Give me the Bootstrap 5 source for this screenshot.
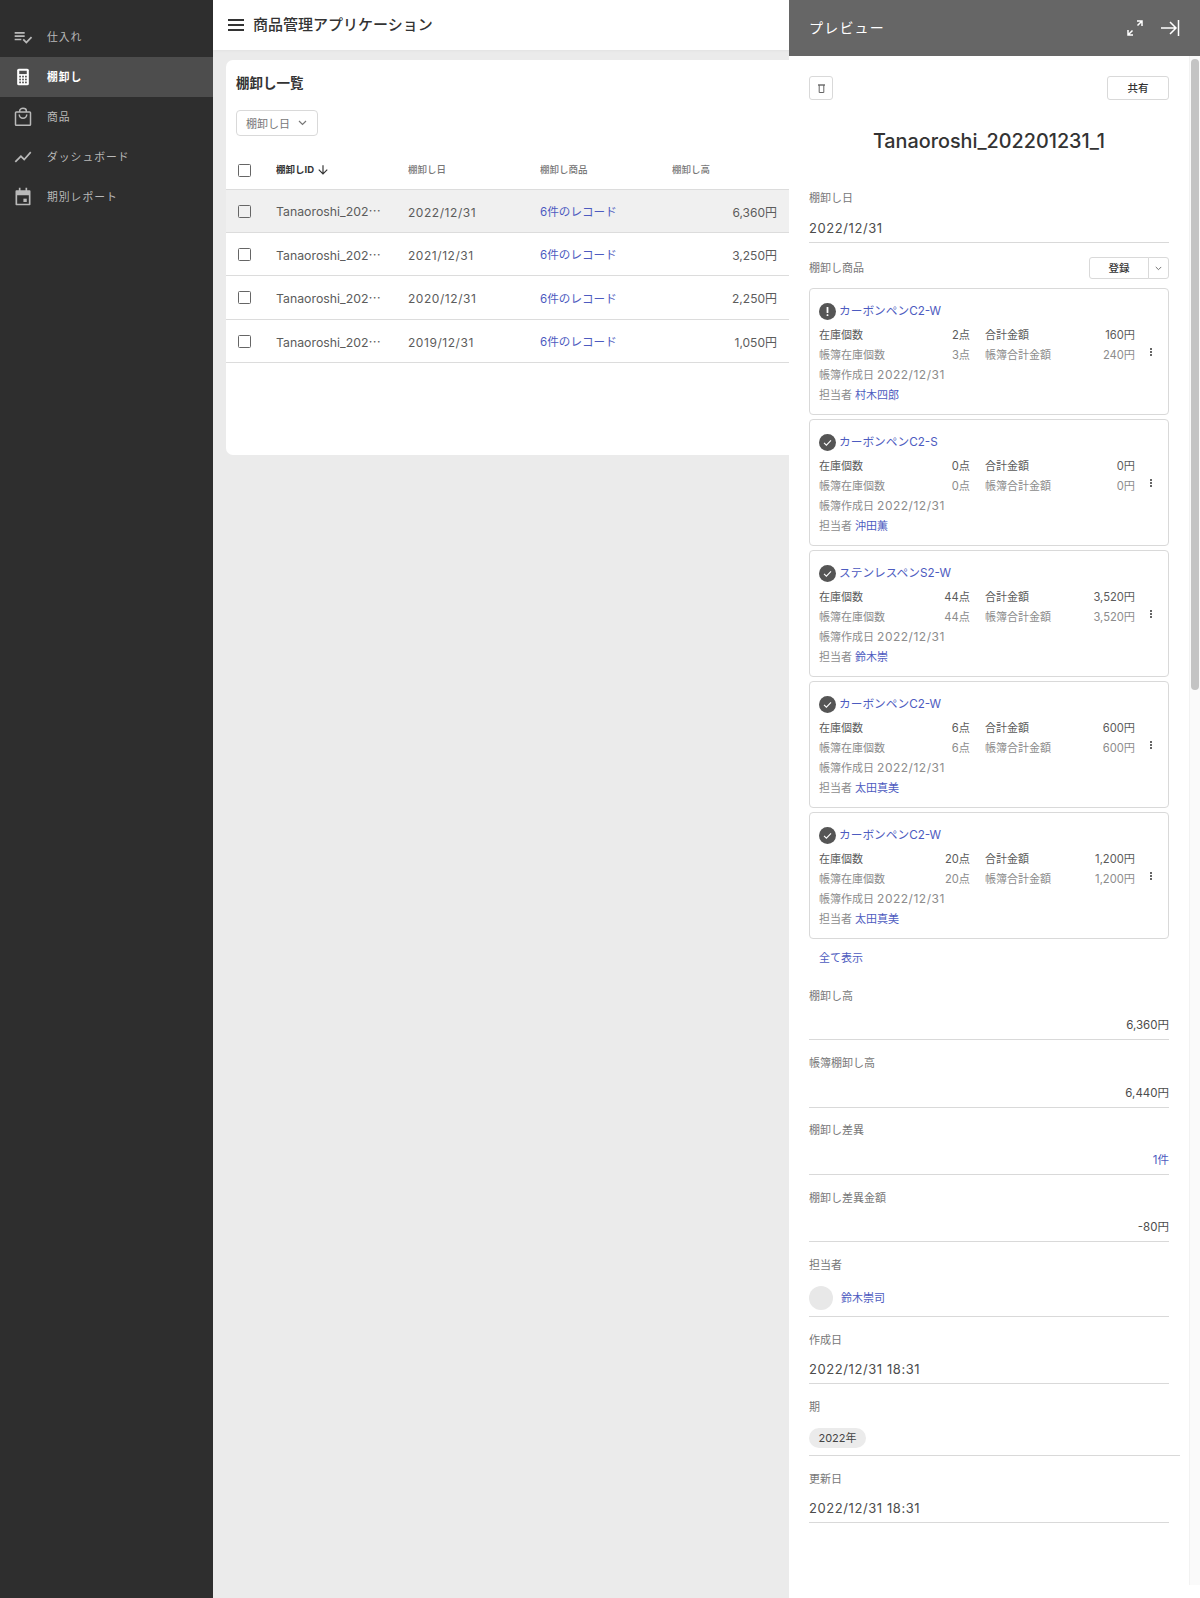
<!DOCTYPE html>
<html lang="ja">
<head>
<meta charset="utf-8">
<title>商品管理アプリケーション</title>
<link rel="stylesheet" href="https://cdn.jsdelivr.net/npm/bootstrap@5.3.0/dist/css/bootstrap.min.css">
<style>
html,body{height:100%;overflow:hidden}
body{font-family:Inter,"Noto Sans CJK JP",sans-serif;color:#333;background:#ebebeb;font-size:13px;--lnk:#4d5bc0}
a{color:var(--lnk);text-decoration:none}
.shell{height:1598px;position:relative}
.side{width:213px;background:#2e2e2e;padding-top:17px;flex:none}
.side-item{height:40px;color:#b9b9b9;font-size:10.8px;letter-spacing:1px;padding-left:13px;gap:14px}
.side-item svg{width:20px;height:20px;flex:none}
.side-item span{padding-top:2px}
.side-item.on{background:#4d4d4d;color:#fff;font-weight:700}
.mainwrap{min-width:0}
.topbar{height:50px;background:#fff;padding-left:15px;gap:9px;font-size:15px;font-weight:500;color:#333;box-shadow:0 1px 3px rgba(0,0,0,.04)}
.sheet{margin:10px 0 0 13px;height:395px;width:800px;background:#fff;border-radius:7px;overflow:hidden;padding-top:13px}
.sheet-title{font-size:13.5px;font-weight:700;line-height:20px;padding-left:10px;color:#333}
.filter-btn{margin:17px 0 15px 10px;height:26px;width:82px;border:1px solid #d9d9d9;border-radius:4px;font-size:11px;color:#777;padding:2px 0 0 9px;background:#fff;gap:8px}
.filter-btn svg{margin-top:-2px}
.inv-table{table-layout:fixed;width:563px;margin:0;--bs-table-bg:transparent;--bs-table-border-color:#dcdcdc}
.inv-table th,.inv-table td{padding:0;vertical-align:middle;border-bottom:1px solid #dcdcdc;white-space:nowrap;overflow:hidden}
.inv-table th{height:38px;font-size:9.5px;font-weight:500;color:#777;padding-top:1px}
.inv-table th.cur{color:#333;font-weight:700}
.inv-table td{height:43.4px;font-size:12.3px;color:#5c5c5c;padding-top:4px}
.inv-table td.dt{font-size:12px;letter-spacing:.55px}
.inv-table td.lk{font-size:11.6px}
.inv-table tr.sel td{background:#f0f0f0}
.tick{display:block;width:13px;height:13px;border:1.5px solid #666;border-radius:1.5px;margin-left:12px}
.inv-table td .tick{margin-top:-3px}
.amt{padding-right:12px!important;text-align:right;font-size:12px!important}
.pane{position:absolute;top:0;right:0;bottom:0;width:411px;background:#fff}
.pane-head{height:56px;background:#666;color:#fff;padding:0 20px;font-size:14px;letter-spacing:1.2px}
.pane-head>span:first-child{margin-top:-2px}
.pane-body{padding:20px 0 0 20px;width:380px}
.rail{position:absolute;top:56px;right:0;bottom:13px;width:11px;background:#fafafa;border-left:1px solid #f2f2f2}
.rail-thumb{position:absolute;top:3px;left:1px;width:8px;height:631px;border-radius:4px;background:#c4c4c4}
.ghost{height:24px;border:1px solid #d9d9d9;border-radius:3px;background:#fff;padding:1px 0 0;font-size:10.5px;font-weight:500;color:#333}
.title-main{font-size:19.8px;font-weight:500;line-height:28px;text-align:center;margin:27px 0 35px;color:#333}
.lbl{font-size:11px;line-height:16px;color:#777}
.val{font-size:13px;letter-spacing:.58px;line-height:20px;color:#4c4c4c;margin-top:11.5px;padding-bottom:4px;border-bottom:1px solid #d9d9d9}
.val.money{font-size:11.5px;letter-spacing:0}
.fld{margin-bottom:14.8px}
.goods-head{height:22px;margin-bottom:9px}
.reg{height:22px}
.reg .ghost{height:22px}
.stock{border:1px solid #d9d9d9;border-radius:4px;padding:12px 10px 9px 9px;margin-bottom:4px;height:127px;font-size:11px;line-height:20px;color:#5a5a5a}
.stock-name{font-size:11.7px;gap:3px;margin-bottom:4px}
.stock-data{width:316px}
.half{width:151px}
.half+.half{width:150px;margin-left:15px}
.half span+span{font-size:11.2px}
.dim{color:#8c8c8c}
.dt-in{font-size:12px;letter-spacing:.5px}
.dots{position:absolute;top:58px;left:339px}
.status{width:17px;height:17px;flex:none}
.all-link{display:block;font-size:11px;line-height:16px;padding-left:10px;margin:11px 0 21.5px}
.who{margin-top:13px;padding-bottom:6px;letter-spacing:0}
.who a{font-size:11px}
.avatar{width:24px;height:24px;border-radius:50%;background:#e8e8e8;flex:none}
.chip{display:block;background:#ebebeb;border-radius:10px;height:20px;width:57px;font-size:11px;letter-spacing:0;line-height:20px;text-align:center;color:#444}
.wide{width:371px;margin-top:13px;padding-bottom:7px}
</style>
</head>
<body>
<div class="shell d-flex">
  <nav class="side d-flex flex-column">
    <div class="side-item d-flex align-items-center"><svg viewBox="0 0 24 24" fill="#b9b9b9"><path d="M14 10H2v2h12v-2zm0-4H2v2h12V6zM2 16h8v-2H2v2zm19.5-4.5L23 13l-6.99 7-4.51-4.5L13 14l3.01 3 5.49-5.5z"/></svg><span>仕入れ</span></div>
    <div class="side-item on d-flex align-items-center"><svg viewBox="0 0 24 24"><rect x="5" y="2" width="14" height="20" rx="2" fill="#fff"/><rect x="7.5" y="4.5" width="9" height="4" fill="#4d4d4d"/><g fill="#4d4d4d"><rect x="7.5" y="10.5" width="2" height="2"/><rect x="11" y="10.5" width="2" height="2"/><rect x="14.5" y="10.5" width="2" height="2"/><rect x="7.5" y="14" width="2" height="2"/><rect x="11" y="14" width="2" height="2"/><rect x="14.5" y="14" width="2" height="2"/><rect x="7.5" y="17.5" width="2" height="2"/><rect x="11" y="17.5" width="2" height="2"/><rect x="14.5" y="17.5" width="2" height="2"/></g></svg><span>棚卸し</span></div>
    <div class="side-item d-flex align-items-center"><svg viewBox="0 0 24 24" fill="none" stroke="#b9b9b9" stroke-width="1.8"><rect x="3" y="6" width="18" height="16" rx="1"/><path d="M8 6V4.5a4 3 0 0 1 8 0V6M7.5 9a4.5 4.5 0 0 0 9 0"/></svg><span>商品</span></div>
    <div class="side-item d-flex align-items-center"><svg viewBox="0 0 24 24" fill="#b9b9b9"><path d="M3.5 18.49l6-6.01 4 4L22 6.92l-1.41-1.41-7.09 7.97-4-4L2 16.99z"/></svg><span>ダッシュボード</span></div>
    <div class="side-item d-flex align-items-center"><svg viewBox="0 0 24 24" fill="#b9b9b9"><path d="M7 1h2v3h6V1h2v3h3a1 1 0 0 1 1 1v16a1 1 0 0 1-1 1H4a1 1 0 0 1-1-1V5a1 1 0 0 1 1-1h3V1zM5 10v10h14V10H5z"/><rect x="12.5" y="14" width="4" height="4"/></svg><span>期別レポート</span></div>
  </nav>
  <div class="mainwrap flex-grow-1">
    <header class="topbar d-flex align-items-center">
      <svg width="16" height="12" viewBox="0 0 16 12" fill="#333"><rect width="16" height="2"/><rect y="5" width="16" height="2"/><rect y="10" width="16" height="2"/></svg>
      <span>商品管理アプリケーション</span>
    </header>
    <section class="sheet">
      <div class="sheet-title">棚卸し一覧</div>
      <button type="button" class="filter-btn btn d-flex align-items-center"><span>棚卸し日</span><svg width="9" height="6" viewBox="0 0 9 6" fill="none" stroke="#777" stroke-width="1.2"><path d="M1 1l3.5 3.5L8 1"/></svg></button>
      <table class="table inv-table">
        <colgroup><col style="width:50px"><col style="width:132px"><col style="width:132px"><col style="width:132px"><col style="width:117px"></colgroup>
        <thead><tr><th><span class="tick"></span></th><th class="cur">棚卸しID <svg width="14" height="14" viewBox="0 0 24 24" fill="#333"><path d="M20 12l-1.41-1.41L13 16.17V4h-2v12.17l-5.58-5.59L4 12l8 8 8-8z"/></svg></th><th>棚卸し日</th><th>棚卸し商品</th><th>棚卸し高</th></tr></thead>
        <tbody>
          <tr class="sel"><td><span class="tick"></span></td><td>Tanaoroshi_202⋯</td><td class="dt">2022/12/31</td><td class="lk"><a href="#">6件のレコード</a></td><td class="amt">6,360円</td></tr>
          <tr><td><span class="tick"></span></td><td>Tanaoroshi_202⋯</td><td class="dt">2021/12/31</td><td class="lk"><a href="#">6件のレコード</a></td><td class="amt">3,250円</td></tr>
          <tr><td><span class="tick"></span></td><td>Tanaoroshi_202⋯</td><td class="dt">2020/12/31</td><td class="lk"><a href="#">6件のレコード</a></td><td class="amt">2,250円</td></tr>
          <tr><td><span class="tick"></span></td><td>Tanaoroshi_202⋯</td><td class="dt">2019/12/31</td><td class="lk"><a href="#">6件のレコード</a></td><td class="amt">1,050円</td></tr>
        </tbody>
      </table>
    </section>
  </div>
  <aside class="pane">
    <div class="pane-head d-flex align-items-center justify-content-between">
      <span>プレビュー</span>
      <span class="d-flex align-items-center gap-3">
        <svg width="18" height="18" viewBox="0 0 18 18" fill="none" stroke="#fff" stroke-width="1.5"><path d="M11 2h5v5M16 2l-4.5 4.5M7 16H2v-5M2 16l4.5-4.5"/></svg>
        <svg width="20" height="18" viewBox="0 0 20 18" fill="none" stroke="#fff" stroke-width="1.5"><path d="M1 9h15M10 3l6 6-6 6M18.5 1v16"/></svg>
      </span>
    </div>
    <div class="pane-body">
      <div class="d-flex justify-content-between">
        <button type="button" class="btn ghost d-flex align-items-center justify-content-center" style="width:24px"><svg width="7" height="9" viewBox="0 0 7 9" fill="none" stroke="#666"><path d="M0 1h7" stroke-width="1.4"/><path d="M1.2 1v7.5h4.6V1" stroke-width="1"/></svg></button>
        <button type="button" class="btn ghost" style="width:62px">共有</button>
      </div>
      <div class="title-main">Tanaoroshi_202201231_1</div>
      <div class="fld"><div class="lbl">棚卸し日</div><div class="val">2022/12/31</div></div>
      <div class="goods-head d-flex align-items-center justify-content-between">
        <span class="lbl">棚卸し商品</span>
        <span class="reg btn-group"><button type="button" class="btn ghost" style="width:60px">登録</button><button type="button" class="btn ghost d-flex align-items-center justify-content-center" style="width:21px"><svg width="7" height="5" viewBox="0 0 9 6" fill="none" stroke="#666" stroke-width="1.2"><path d="M1 1l3.5 3.5L8 1"/></svg></button></span>
      </div>

      <div class="card stock">
        <div class="stock-name d-flex align-items-center"><svg class="status" viewBox="0 0 17 17"><circle cx="8.5" cy="8.5" r="8.5" fill="#555"/><rect x="7.6" y="4" width="1.8" height="6" rx=".6" fill="#fff"/><rect x="7.6" y="11.2" width="1.8" height="1.8" rx=".6" fill="#fff"/></svg><a href="#">カーボンペンC2-W</a></div>
        <div class="stock-data">
          <div class="d-flex"><div class="half d-flex justify-content-between"><span>在庫個数</span><span>2点</span></div><div class="half d-flex justify-content-between"><span>合計金額</span><span>160円</span></div></div>
          <div class="d-flex dim"><div class="half d-flex justify-content-between"><span>帳簿在庫個数</span><span>3点</span></div><div class="half d-flex justify-content-between"><span>帳簿合計金額</span><span>240円</span></div></div>
          <div class="dim">帳簿作成日 <span class="dt-in">2022/12/31</span></div>
          <div class="dim">担当者 <a href="#">村木四郎</a></div>
        </div>
        <svg class="dots" width="4" height="10" viewBox="0 0 4 10" fill="#666"><rect x="1" y="1" width="2" height="2"/><rect x="1" y="4" width="2" height="2"/><rect x="1" y="7" width="2" height="2"/></svg>
      </div>
      <div class="card stock">
        <div class="stock-name d-flex align-items-center"><svg class="status" viewBox="0 0 17 17"><circle cx="8.5" cy="8.5" r="8.5" fill="#555"/><path d="M5 8.8l2.4 2.4L12 6.4" fill="none" stroke="#fff" stroke-width="1.1"/></svg><a href="#">カーボンペンC2-S</a></div>
        <div class="stock-data">
          <div class="d-flex"><div class="half d-flex justify-content-between"><span>在庫個数</span><span>0点</span></div><div class="half d-flex justify-content-between"><span>合計金額</span><span>0円</span></div></div>
          <div class="d-flex dim"><div class="half d-flex justify-content-between"><span>帳簿在庫個数</span><span>0点</span></div><div class="half d-flex justify-content-between"><span>帳簿合計金額</span><span>0円</span></div></div>
          <div class="dim">帳簿作成日 <span class="dt-in">2022/12/31</span></div>
          <div class="dim">担当者 <a href="#">沖田薫</a></div>
        </div>
        <svg class="dots" width="4" height="10" viewBox="0 0 4 10" fill="#666"><rect x="1" y="1" width="2" height="2"/><rect x="1" y="4" width="2" height="2"/><rect x="1" y="7" width="2" height="2"/></svg>
      </div>
      <div class="card stock">
        <div class="stock-name d-flex align-items-center"><svg class="status" viewBox="0 0 17 17"><circle cx="8.5" cy="8.5" r="8.5" fill="#555"/><path d="M5 8.8l2.4 2.4L12 6.4" fill="none" stroke="#fff" stroke-width="1.1"/></svg><a href="#">ステンレスペンS2-W</a></div>
        <div class="stock-data">
          <div class="d-flex"><div class="half d-flex justify-content-between"><span>在庫個数</span><span>44点</span></div><div class="half d-flex justify-content-between"><span>合計金額</span><span>3,520円</span></div></div>
          <div class="d-flex dim"><div class="half d-flex justify-content-between"><span>帳簿在庫個数</span><span>44点</span></div><div class="half d-flex justify-content-between"><span>帳簿合計金額</span><span>3,520円</span></div></div>
          <div class="dim">帳簿作成日 <span class="dt-in">2022/12/31</span></div>
          <div class="dim">担当者 <a href="#">鈴木崇</a></div>
        </div>
        <svg class="dots" width="4" height="10" viewBox="0 0 4 10" fill="#666"><rect x="1" y="1" width="2" height="2"/><rect x="1" y="4" width="2" height="2"/><rect x="1" y="7" width="2" height="2"/></svg>
      </div>
      <div class="card stock">
        <div class="stock-name d-flex align-items-center"><svg class="status" viewBox="0 0 17 17"><circle cx="8.5" cy="8.5" r="8.5" fill="#555"/><path d="M5 8.8l2.4 2.4L12 6.4" fill="none" stroke="#fff" stroke-width="1.1"/></svg><a href="#">カーボンペンC2-W</a></div>
        <div class="stock-data">
          <div class="d-flex"><div class="half d-flex justify-content-between"><span>在庫個数</span><span>6点</span></div><div class="half d-flex justify-content-between"><span>合計金額</span><span>600円</span></div></div>
          <div class="d-flex dim"><div class="half d-flex justify-content-between"><span>帳簿在庫個数</span><span>6点</span></div><div class="half d-flex justify-content-between"><span>帳簿合計金額</span><span>600円</span></div></div>
          <div class="dim">帳簿作成日 <span class="dt-in">2022/12/31</span></div>
          <div class="dim">担当者 <a href="#">太田真美</a></div>
        </div>
        <svg class="dots" width="4" height="10" viewBox="0 0 4 10" fill="#666"><rect x="1" y="1" width="2" height="2"/><rect x="1" y="4" width="2" height="2"/><rect x="1" y="7" width="2" height="2"/></svg>
      </div>
      <div class="card stock">
        <div class="stock-name d-flex align-items-center"><svg class="status" viewBox="0 0 17 17"><circle cx="8.5" cy="8.5" r="8.5" fill="#555"/><path d="M5 8.8l2.4 2.4L12 6.4" fill="none" stroke="#fff" stroke-width="1.1"/></svg><a href="#">カーボンペンC2-W</a></div>
        <div class="stock-data">
          <div class="d-flex"><div class="half d-flex justify-content-between"><span>在庫個数</span><span>20点</span></div><div class="half d-flex justify-content-between"><span>合計金額</span><span>1,200円</span></div></div>
          <div class="d-flex dim"><div class="half d-flex justify-content-between"><span>帳簿在庫個数</span><span>20点</span></div><div class="half d-flex justify-content-between"><span>帳簿合計金額</span><span>1,200円</span></div></div>
          <div class="dim">帳簿作成日 <span class="dt-in">2022/12/31</span></div>
          <div class="dim">担当者 <a href="#">太田真美</a></div>
        </div>
        <svg class="dots" width="4" height="10" viewBox="0 0 4 10" fill="#666"><rect x="1" y="1" width="2" height="2"/><rect x="1" y="4" width="2" height="2"/><rect x="1" y="7" width="2" height="2"/></svg>
      </div>
      <a class="all-link" href="#">全て表示</a>
      <div class="fld"><div class="lbl">棚卸し高</div><div class="val money text-end">6,360円</div></div>
      <div class="fld"><div class="lbl">帳簿棚卸し高</div><div class="val money text-end">6,440円</div></div>
      <div class="fld"><div class="lbl">棚卸し差異</div><div class="val money text-end"><a href="#">1件</a></div></div>
      <div class="fld"><div class="lbl">棚卸し差異金額</div><div class="val money text-end">-80円</div></div>
      <div class="fld"><div class="lbl">担当者</div><div class="val d-flex align-items-center gap-2 who"><span class="avatar"></span><a href="#">鈴木崇司</a></div></div>
      <div class="fld"><div class="lbl">作成日</div><div class="val">2022/12/31 18:31</div></div>
      <div class="fld"><div class="lbl">期</div><div class="val wide"><span class="chip">2022年</span></div></div>
      <div class="fld"><div class="lbl">更新日</div><div class="val">2022/12/31 18:31</div></div>
    </div>
    <div class="rail"><div class="rail-thumb"></div></div>
  </aside>
</div>
</body>
</html>
